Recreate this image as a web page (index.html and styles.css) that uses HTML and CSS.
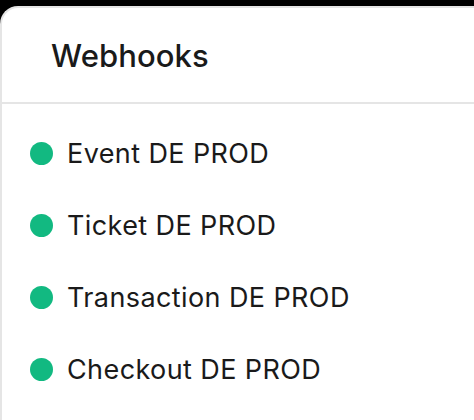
FILE: index.html
```html
<!DOCTYPE html>
<html lang="en">
<head>
    <meta charset="UTF-8">
    <meta name="viewport" content="width=device-width, initial-scale=1.0">
    <title>Webhooks</title>
    <link rel="stylesheet" href="styles.css">
</head>
<body>
    <div class="card">
        <div class="card-header">
            <h2>Webhooks</h2>
        </div>

        <ul class="hook-list">
            <li class="hook"><span class="status-dot"></span>Event DE PROD</li>
            <li class="hook"><span class="status-dot"></span>Ticket DE PROD</li>
            <li class="hook"><span class="status-dot"></span>Transaction DE PROD</li>
            <li class="hook"><span class="status-dot"></span>Checkout DE PROD</li>
        </ul>
    </div>
</body>
</html>
```

FILE: styles.css
```css
html, body {
    height: 100%;
}

body {
    margin: 0;
    padding-top: 6px;
    box-sizing: border-box;
    background: #000;
    overflow: hidden;
    font-family: 'Inter', 'Noto Sans', sans-serif;
    color: #1a1a1a;
}

.card {
    background: #fff;
    border-top: 2px solid #e5e5e5;
    border-left: 2px solid #e5e5e5;
    border-top-left-radius: 18px;
    min-height: 100%;
}

.card-header {
    height: 94px;
    display: flex;
    align-items: center;
    padding: 0 49px;
    border-bottom: 2px solid #e5e5e5;
}

.card-header h2 {
    margin: 0;
    font-size: 31px;
    font-weight: 500;
    letter-spacing: 0.1px;
}

.hook-list {
    list-style: none;
    margin: 0;
    padding: 13px 0 0 28px;
}

.hook {
    height: 72px;
    display: flex;
    align-items: center;
    gap: 14px;
    font-size: 27px;
    font-weight: 400;
    letter-spacing: 0.4px;
}

.status-dot {
    width: 23px;
    height: 23px;
    border-radius: 50%;
    background: #12b981;
    flex-shrink: 0;
}
```
